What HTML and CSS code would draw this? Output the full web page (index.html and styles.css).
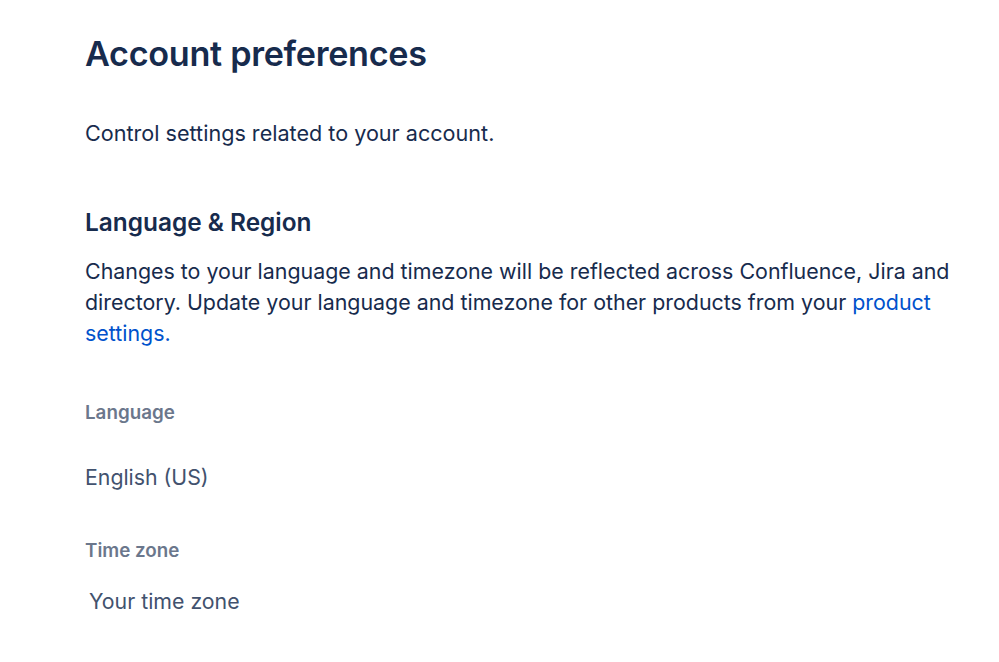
FILE: index.html
```html
<!DOCTYPE html>
<html lang="en">
<head>
    <meta charset="UTF-8">
    <meta name="viewport" content="width=device-width, initial-scale=1.0">
    <title>Account preferences</title>
    <link rel="stylesheet" href="styles.css">
</head>
<body>
    <div class="page">
        <h1>Account preferences</h1>
        <p class="intro">Control settings related to your account.</p>

        <section class="section">
            <h2>Language &amp; Region</h2>
            <p class="desc">Changes to your language and timezone will be reflected across Confluence, Jira and directory. Update your language and timezone for other products from your <a href="#">product settings.</a></p>

            <div class="field">
                <div class="label">Language</div>
                <div class="value">English (US)</div>
            </div>

            <div class="field tz">
                <div class="label">Time zone</div>
                <div class="value">Your time zone</div>
            </div>
        </section>
    </div>
</body>
</html>
```

FILE: styles.css
```css
body {
    margin: 0;
    font-family: Inter, "Noto Sans", sans-serif;
    color: #172b4d;
    background: #fff;
}
.page {
    padding: 32px 30px 0 85px;
}
h1 {
    font-size: 34.2px;
    font-weight: 600;
    line-height: 44px;
    margin: 0;
    letter-spacing: -0.3px;
}
.intro {
    font-size: 21.6px;
    line-height: 30px;
    margin: 42px 0 0;
}
h2 {
    font-size: 24.4px;
    font-weight: 600;
    line-height: 30px;
    margin: 59px 0 0;
}
.desc {
    font-size: 21.4px;
    line-height: 31px;
    margin: 19px 0 0;
}
.desc a {
    color: #0052cc;
    text-decoration: none;
}
.field {
    margin-top: 52px;
}
.label {
    font-size: 18.8px;
    font-weight: 600;
    line-height: 24px;
    color: #6b778c;
}
.value {
    font-size: 21.3px;
    line-height: 30px;
    color: #42526e;
    margin-top: 37px;
}
.tz {
    margin-top: 47px;
}
.tz .value {
    margin-top: 23px;
    padding-left: 4px;
}
```
